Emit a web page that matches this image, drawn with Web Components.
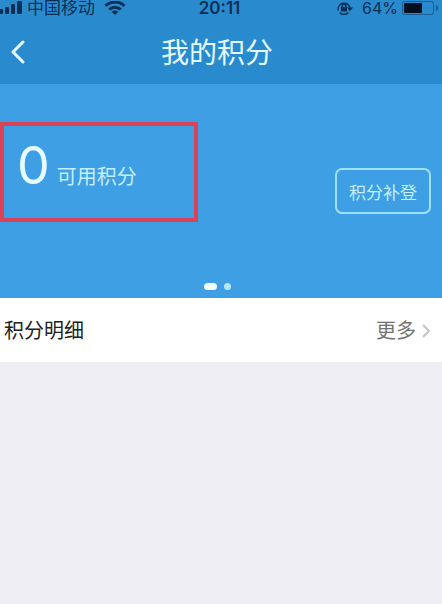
<!DOCTYPE html>
<html lang="zh-CN">
<head>
<meta charset="utf-8">
<meta name="viewport" content="width=device-width, initial-scale=1">
<title>我的积分</title>
<style>
  body {
    margin: 0;
    background: #efeef4;
    font-family: Inter, "Noto Sans CJK SC", sans-serif;
  }
</style>
</head>
<body>
<points-page></points-page>

<script>
class BaseElement extends HTMLElement {
  constructor() {
    super();
    this.attachShadow({ mode: 'open' });
  }

  connectedCallback() {
    const template = document.createElement('template');
    template.innerHTML = `<style>${this.getStyles()}</style>${this.getTemplate()}`;
    this.shadowRoot.replaceChildren(template.content.cloneNode(true));
  }
}

// Signal, carrier, clock and battery
class StatusBar extends BaseElement {
  getTemplate() {
    return `
      <div class="side">
        <svg width="22" height="14" viewBox="0 0 22 14" fill="currentColor" aria-hidden="true">
          <rect x="-1" y="8" width="4" height="5" rx="1"/>
          <rect x="5" y="6" width="4" height="7" rx="1"/>
          <rect x="11" y="3" width="4" height="10" rx="1"/>
          <rect x="17" y="0" width="5" height="13" rx="1"/>
        </svg>
        <span class="carrier"><slot name="carrier"></slot></span>
        <svg class="wifi" width="22" height="14" viewBox="0 0 22 14" fill="none" stroke="currentColor" stroke-width="3" aria-hidden="true">
          <path d="M1.5 4.8C7 -.3 15 -.3 20.5 4.8"/>
          <path d="M5.2 8.5C8.5 5.4 13.5 5.4 16.8 8.5"/>
          <path d="M11 14L7.6 10.7C9.6 9 12.4 9 14.4 10.7Z" fill="currentColor" stroke="none"/>
        </svg>
      </div>
      <span class="time"><slot name="time"></slot></span>
      <div class="side end">
        <svg width="18" height="14" viewBox="0 0 18 14" fill="none" stroke="currentColor" stroke-width="1.5" aria-hidden="true">
          <path d="M2.2 9.5A6 6 0 1 1 14 7"/>
          <path d="M3.6 11.6A6 6 0 0 0 12.400 11.600"/>
          <path d="M11 6.500H17L14 10.200Z" fill="currentColor" stroke="none"/>
          <rect x="5" y="6" width="6" height="4.500" fill="currentColor" stroke="none"/>
          <path d="M6.200 6.500V5A1.800 1.800 0 0 1 9.800 5V6.500"/>
        </svg>
        <span class="level"><slot name="level"></slot></span>
        <svg width="38" height="16" viewBox="0 0 38 16" aria-hidden="true">
          <rect x="1.500" y="1.500" width="31" height="13" rx="2" fill="none" stroke="#165b91"/>
          <rect x="3" y="3" width="18" height="10" rx="1" fill="#03101f"/>
          <path d="M35 5Q37 5 37 8T35 11Z" fill="#165b91"/>
        </svg>
      </div>
    `;
  }

  getStyles() {
    return `
      :host {
        display: grid;
        grid-template-columns: 1fr auto 1fr;
        align-items: center;
        padding: 0 3px 4px 0;
        color: #0b2f55;
        font-size: 17px;
        line-height: 16px;
      }
      .side { display: flex; align-items: center; white-space: nowrap; }
      .end { justify-content: flex-end; }
      .side svg { flex: none; }
      .carrier { margin-left: 5px; }
      .wifi { margin-left: 9px; }
      .time { font-weight: 600; }
      .level { margin: 0 3px 0 8px; font-size: 16px; }
    `;
  }
}
customElements.define('status-bar', StatusBar);

class NavBar extends BaseElement {
  getTemplate() {
    return `
      <a href="#" aria-label="返回">
        <svg width="14" height="24" viewBox="0 0 14 24" fill="none" stroke="currentColor" stroke-width="3" stroke-linecap="round" stroke-linejoin="round">
          <path d="M12 2L2 12L12 22"/>
        </svg>
      </a>
      <h1><slot></slot></h1>
    `;
  }

  getStyles() {
    return `
      :host {
        display: grid;
        grid-template-columns: 40px 1fr 48px;
        align-items: center;
        height: 64px;
        color: #e6fbff;
      }
      a { display: flex; padding: 12px 0 12px 11px; color: inherit; }
      h1 {
        margin: 0;
        padding-top: 2px;
        font-size: 28px;
        font-weight: 400;
        line-height: 40px;
        text-align: center;
      }
    `;
  }
}
customElements.define('nav-bar', NavBar);

// Blue card with the balance, the claim button and the page dots
class PointsHero extends BaseElement {
  getTemplate() {
    return `
      <div class="main">
        <div class="balance">
          <span class="value"><slot name="value"></slot></span>
          <span class="label"><slot name="label"></slot></span>
        </div>
        <button type="button"><slot name="action"></slot></button>
      </div>
      <div class="dots"><i class="active"></i><i></i></div>
    `;
  }

  getStyles() {
    return `
      :host {
        display: block;
        padding: 38px 0 8px;
        background: #3e9fe5;
        color: #e6fbff;
      }
      .main {
        display: flex;
        justify-content: space-between;
        padding-right: 11px;
      }
      .balance {
        box-sizing: border-box;
        display: flex;
        align-items: baseline;
        gap: 7px;
        width: 46%;
        height: 100px;
        padding: 10px 0 0 13px;
        border: 4px solid #da4257;
      }
      .value { font-size: 52px; font-weight: 400; line-height: 60px; }
      .label { color: #c5effc; font-size: 20px; line-height: 28px; }
      button {
        height: 46px;
        margin-top: 46px;
        padding: 0 12px;
        border: 2px solid #9fe0fb;
        border-radius: 7px;
        background: none;
        color: #c5effc;
        font: inherit;
        font-size: 17px;
        white-space: nowrap;
      }
      .dots {
        display: flex;
        justify-content: center;
        align-items: center;
        gap: 7px;
        height: 8px;
        margin-top: 60px;
        padding-right: 8px;
      }
      i { width: 7px; height: 7px; border-radius: 4px; background: #b5e8fc; }
      .active { width: 13px; background: #f4ffff; }
    `;
  }
}
customElements.define('points-hero', PointsHero);

class ListRow extends BaseElement {
  getTemplate() {
    return `
      <h2><slot></slot></h2>
      <a href="#">
        <slot name="more"></slot>
        <svg width="9" height="14" viewBox="0 0 9 14" fill="none" stroke="#c4c4c6" stroke-width="2" aria-hidden="true">
          <path d="M1 1L7 7L1 13"/>
        </svg>
      </a>
    `;
  }

  getStyles() {
    return `
      :host {
        display: flex;
        align-items: center;
        justify-content: space-between;
        padding: 19px 11px 17px 4px;
        background: #fff;
        color: #222;
        font-size: 20px;
        line-height: 28px;
      }
      h2 { margin: 0; font-size: 20px; font-weight: 400; }
      a {
        display: flex;
        align-items: center;
        gap: 6px;
        color: #737373;
        text-decoration: none;
      }
    `;
  }
}
customElements.define('list-row', ListRow);

class PointsPage extends BaseElement {
  getTemplate() {
    return `
      <header>
        <status-bar>
          <span slot="carrier">中国移动</span>
          <span slot="time">20:11</span>
          <span slot="level">64%</span>
        </status-bar>
        <nav-bar>我的积分</nav-bar>
      </header>
      <main>
        <points-hero>
          <span slot="value">0</span>
          <span slot="label">可用积分</span>
          <span slot="action">积分补登</span>
        </points-hero>
        <list-row>积分明细<span slot="more">更多</span></list-row>
      </main>
    `;
  }

  getStyles() {
    return `
      :host { display: block; }
      header { background: #298bce; }
    `;
  }
}
customElements.define('points-page', PointsPage);
</script>
</body>
</html>
